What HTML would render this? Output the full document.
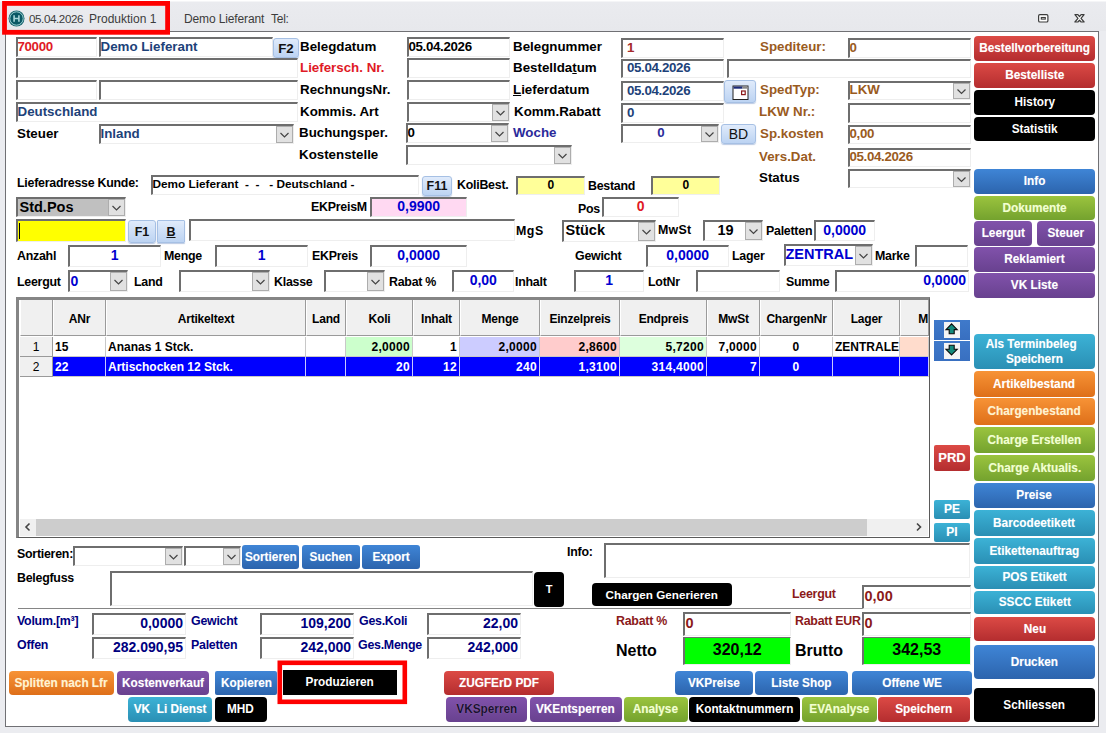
<!DOCTYPE html>
<html><head><meta charset="utf-8"><title>Produktion</title>
<style>
*{box-sizing:border-box}
html,body{margin:0;padding:0}
body{width:1106px;height:733px;overflow:hidden;position:relative;background:#ebecf0;font-family:"Liberation Sans",sans-serif;font-weight:bold}
#win{position:absolute;left:5px;top:31px;width:1094px;height:696px;background:#fff;border:1px solid #707074}
#tb{position:absolute;left:0;top:0;width:1106px;height:31px;background:linear-gradient(#fff 0,#fff 1px,#eaebef 2px,#e7e8ec 100%)}
.tt{position:absolute;top:12px;font-size:12px;font-weight:normal;color:#3c3c3c;white-space:pre;letter-spacing:-.25px}
.f{position:absolute;white-space:nowrap;overflow:hidden;text-indent:-.5px;border-top:2px solid #6e6e6e;border-left:2px solid #6e6e6e;border-right:1px solid #eee;border-bottom:1px solid #eee;}
.l{position:absolute;white-space:nowrap;line-height:1.15}
.cb{position:absolute;right:0;top:0;background:#e1e1e1;border:1px solid #adadad;display:block}
.cb svg{position:absolute;left:-1px;top:-1px}
.b{position:absolute;text-align:center;white-space:nowrap;overflow:hidden}
.sx{display:inline-block;transform:scaleX(.93);transform-origin:50% 50%}
.x{position:absolute;text-align:center;white-space:nowrap;border:1px solid #a6c0e4;border-radius:3px;background:linear-gradient(#e0ebfb,#bcd3f2);color:#111;box-shadow:0 1px 1px rgba(120,150,200,.5)}
.grid{position:absolute;background:#fff;border-top:3px solid #858585;border-left:3px solid #858585;border-right:1px solid #5a5a5a;border-bottom:1px solid #5a5a5a;overflow:hidden;font-size:12px}
.gh{position:absolute;background:#f0f0f0;border-right:1px solid #9a9a9a;border-bottom:1px solid #9a9a9a;border-left:1px solid #fff;text-align:center;color:#000;white-space:nowrap;overflow:hidden;letter-spacing:-.2px}
.gr{position:absolute;background:#f0f0f0;border-right:1px solid #9a9a9a;border-bottom:1px solid #9a9a9a;text-align:center;font-weight:normal;color:#000}
.gc{position:absolute;white-space:nowrap;overflow:hidden;padding:0 2px 0 2px;border-bottom:1px solid #c8c8c8}
</style></head><body>
<div id="tb"></div>
<div id="win"></div>
<svg style="position:absolute;left:8px;top:9.9px" width="17" height="17" viewBox="0 0 17 17"><circle cx="8.5" cy="8.5" r="8" fill="#17636d"/><circle cx="8.5" cy="8.5" r="6.7" fill="#0a5865" stroke="#a9dadc" stroke-width=".9"/><path d="M6.1 5.2v6.6M10.9 5.2v6.6M6.1 8.5h4.8" stroke="#a8d6da" stroke-width="1.6" fill="none"/></svg>
<div class="tt" style="left:29px;font-size:11.6px;letter-spacing:-.4px">05.04.2026</div>
<div class="tt" style="left:89px;letter-spacing:0">Produktion 1</div>
<div class="tt" style="left:184px;letter-spacing:-.13px">Demo Lieferant</div>
<div class="tt" style="left:271px;letter-spacing:-.25px">Tel:</div>
<svg style="position:absolute;left:1037px;top:13px" width="13" height="11" viewBox="0 0 13 11"><rect x="1.6" y="1.6" width="9.3" height="7.4" rx="1.3" fill="#fff" stroke="#3c3c3c" stroke-width="1.2"/><rect x="4.3" y="4.5" width="4" height="1.6" fill="#fff" stroke="#3c3c3c" stroke-width="1.1"/></svg>
<svg style="position:absolute;left:1073px;top:13px" width="13" height="11" viewBox="0 0 13 11"><path d="M1.9 1.6 L4.9 1.6 L6.5 3.5 L8.1 1.6 L11.1 1.6 L8 5.3 L11.1 9 L8.1 9 L6.5 7.1 L4.9 9 L1.9 9 L5 5.3 Z" fill="#fff" stroke="#3c3c3c" stroke-width="1.2" stroke-linejoin="round"/></svg>
<div class="f" style="left:16px;top:37px;width:81px;height:20px;background:#fff;color:#e01a26;text-align:left;font-size:13.33px;line-height:15px;padding:0 0px;letter-spacing:-.35px;">70000</div>
<div class="f" style="left:99px;top:37px;width:174px;height:20px;background:#fff;color:#1d4279;text-align:left;font-size:13.33px;line-height:15px;padding:0 0px;">Demo Lieferant</div>
<div class="x" style="left:273px;top:38px;width:26px;height:20px;line-height:19px;font-size:13.33px;">F2</div>
<div class="f" style="left:16px;top:58px;width:282px;height:20px;background:#fff;color:#000;text-align:left;font-size:13.33px;line-height:15px;padding:0 0px;"></div>
<div class="f" style="left:16px;top:80px;width:81px;height:20px;background:#fff;color:#000;text-align:left;font-size:13.33px;line-height:15px;padding:0 0px;"></div>
<div class="f" style="left:99px;top:80px;width:199px;height:20px;background:#fff;color:#000;text-align:left;font-size:13.33px;line-height:15px;padding:0 0px;"></div>
<div class="f" style="left:16px;top:102px;width:282px;height:20px;background:#fff;color:#1d4279;text-align:left;font-size:13.33px;line-height:15px;padding:0 0px;">Deutschland</div>
<div class="l" style="left:17px;top:126px;color:#000;font-size:13.33px;">Steuer</div>
<div class="f" style="left:99px;top:124px;width:195px;height:20px;background:#fff;color:#1d4279;text-align:left;font-size:13.33px;line-height:15px;padding:0 0px 0 0px;">Inland<span class="cb" style="width:17px;height:17px"><svg width="17" height="17" viewBox="0 0 17 17"><path d="M4.5 7.0 L8.5 11.0 L12.5 7.0" fill="none" stroke="#444" stroke-width="1.2"/></svg></span></div>
<div class="l" style="left:300px;top:39px;color:#000;font-size:13.33px;">Belegdatum</div>
<div class="l" style="left:300px;top:60px;color:#e01a26;font-size:13.33px;">Liefersch. Nr.</div>
<div class="l" style="left:300px;top:82px;color:#000;font-size:13.33px;">RechnungsNr.</div>
<div class="l" style="left:300px;top:104px;color:#000;font-size:13.33px;">Kommis. Art</div>
<div class="l" style="left:299px;top:125px;color:#000;font-size:13.33px;">Buchungsper.</div>
<div class="l" style="left:299px;top:147px;color:#000;font-size:13.33px;">Kostenstelle</div>
<div class="f" style="left:407px;top:37px;width:103px;height:20px;background:#fff;color:#000;text-align:left;font-size:13.33px;line-height:15px;padding:0 0px;letter-spacing:-.35px;">05.04.2026</div>
<div class="f" style="left:407px;top:58px;width:103px;height:20px;background:#fff;color:#000;text-align:left;font-size:13.33px;line-height:15px;padding:0 0px;"></div>
<div class="f" style="left:407px;top:80px;width:103px;height:20px;background:#fff;color:#000;text-align:left;font-size:13.33px;line-height:15px;padding:0 0px;"></div>
<div class="f" style="left:407px;top:102px;width:103px;height:20px;background:#fff;color:#000;text-align:left;font-size:13.33px;line-height:15px;padding:0 0px 0 0px;"><span class="cb" style="width:17px;height:17px"><svg width="17" height="17" viewBox="0 0 17 17"><path d="M4.5 7.0 L8.5 11.0 L12.5 7.0" fill="none" stroke="#444" stroke-width="1.2"/></svg></span></div>
<div class="f" style="left:406px;top:123px;width:103px;height:20px;background:#fff;color:#000;text-align:left;font-size:13.33px;line-height:15px;padding:0 0px 0 0px;letter-spacing:-.35px;">0<span class="cb" style="width:17px;height:17px"><svg width="17" height="17" viewBox="0 0 17 17"><path d="M4.5 7.0 L8.5 11.0 L12.5 7.0" fill="none" stroke="#444" stroke-width="1.2"/></svg></span></div>
<div class="f" style="left:406px;top:145px;width:166px;height:20px;background:#fff;color:#000;text-align:left;font-size:13.33px;line-height:15px;padding:0 0px 0 0px;"><span class="cb" style="width:17px;height:17px"><svg width="17" height="17" viewBox="0 0 17 17"><path d="M4.5 7.0 L8.5 11.0 L12.5 7.0" fill="none" stroke="#444" stroke-width="1.2"/></svg></span></div>
<div class="l" style="left:513px;top:39px;color:#000;font-size:13.33px;">Belegnummer</div>
<div class="l" style="left:513px;top:60px;color:#000;font-size:13.33px;">Bestellda<u>t</u>um</div>
<div class="l" style="left:513px;top:82px;color:#000;font-size:13.33px;"><u>L</u>ieferdatum</div>
<div class="l" style="left:514px;top:104px;color:#000;font-size:13.33px;">Komm.Rabatt</div>
<div class="l" style="left:513px;top:125px;color:#2a2a9a;font-size:13.33px;">Woche</div>
<div class="f" style="left:621px;top:38px;width:103px;height:20px;background:#fff;color:#a52a2a;text-align:left;font-size:13.33px;line-height:15px;padding:0 4.5px;letter-spacing:-.35px;">1</div>
<div class="f" style="left:621px;top:59px;width:103px;height:19px;background:#fff;color:#1d4279;text-align:left;font-size:13.33px;line-height:14px;padding:0 4.5px;letter-spacing:-.35px;">05.04.2026</div>
<div class="f" style="left:727px;top:59px;width:244px;height:19px;background:#fff;color:#000;text-align:left;font-size:13.33px;line-height:14px;padding:0 0px;"></div>
<div class="f" style="left:621px;top:81px;width:103px;height:20px;background:#fff;color:#1d4279;text-align:left;font-size:13.33px;line-height:15px;padding:0 4.5px;letter-spacing:-.35px;">05.04.2026</div>
<div class="f" style="left:621px;top:103px;width:103px;height:20px;background:#fff;color:#1d4279;text-align:left;font-size:13.33px;line-height:15px;padding:0 4.5px;letter-spacing:-.35px;">0</div>
<div class="f" style="left:621px;top:124px;width:98px;height:19px;background:#fff;color:#2a2a9a;text-align:center;font-size:13.33px;line-height:14px;padding:0 19px 0 0px;letter-spacing:-.35px;">0<span class="cb" style="width:17px;height:16px"><svg width="17" height="16" viewBox="0 0 17 16"><path d="M4.5 6.5 L8.5 10.5 L12.5 6.5" fill="none" stroke="#444" stroke-width="1.2"/></svg></span></div>
<div class="x" style="left:721px;top:124px;width:35px;height:20px;line-height:19px;font-size:14px;font-weight:normal;">BD</div>
<div class="x" style="left:724px;top:80px;width:32px;height:23px"><svg width="32" height="23" viewBox="0 0 32 23"><rect x="8" y="5" width="15" height="13.5" fill="#fff" stroke="#222" stroke-width="1"/><rect x="8.5" y="5.5" width="9" height="2.2" fill="#1a2a7a"/><rect x="17.5" y="5.5" width="5" height="2.2" fill="#888"/><rect x="16.6" y="10" width="3.6" height="3.6" fill="#fff" stroke="#8b1a1a" stroke-width="1.2"/></svg></div>
<div class="l" style="left:760px;top:39px;color:#9a5b1e;font-size:13.33px;">Spediteur:</div>
<div class="l" style="left:760px;top:82px;color:#9a5b1e;font-size:13.33px;">SpedTyp:</div>
<div class="l" style="left:759px;top:104px;color:#9a5b1e;font-size:13.33px;">LKW Nr.:</div>
<div class="l" style="left:760px;top:126px;color:#9a5b1e;font-size:13.33px;">Sp.kosten</div>
<div class="l" style="left:759px;top:149px;color:#9a5b1e;font-size:13.33px;">Vers.Dat.</div>
<div class="l" style="left:759px;top:170px;color:#000;font-size:13.33px;">Status</div>
<div class="f" style="left:848px;top:38px;width:123px;height:20px;background:#fff;color:#9a5b1e;text-align:left;font-size:13.33px;line-height:15px;padding:0 0px;letter-spacing:-.35px;">0</div>
<div class="f" style="left:848px;top:81px;width:123px;height:19px;background:#fff;color:#9a5b1e;text-align:left;font-size:13.33px;line-height:14px;padding:0 0px 0 0px;">LKW<span class="cb" style="width:17px;height:16px"><svg width="17" height="16" viewBox="0 0 17 16"><path d="M4.5 6.5 L8.5 10.5 L12.5 6.5" fill="none" stroke="#444" stroke-width="1.2"/></svg></span></div>
<div class="f" style="left:848px;top:103px;width:123px;height:20px;background:#fff;color:#000;text-align:left;font-size:13.33px;line-height:15px;padding:0 0px;"></div>
<div class="f" style="left:848px;top:125px;width:123px;height:19px;background:#fff;color:#9a5b1e;text-align:left;font-size:13.33px;line-height:14px;padding:0 0px;letter-spacing:-.35px;">0,00</div>
<div class="f" style="left:848px;top:148px;width:123px;height:19px;background:#fff;color:#9a5b1e;text-align:left;font-size:13.33px;line-height:14px;padding:0 0px;letter-spacing:-.35px;">05.04.2026</div>
<div class="f" style="left:848px;top:169px;width:123px;height:19px;background:#fff;color:#000;text-align:left;font-size:13.33px;line-height:14px;padding:0 0px 0 0px;"><span class="cb" style="width:17px;height:16px"><svg width="17" height="16" viewBox="0 0 17 16"><path d="M4.5 6.5 L8.5 10.5 L12.5 6.5" fill="none" stroke="#444" stroke-width="1.2"/></svg></span></div>
<div class="l" style="left:17px;top:176.0px;color:#000;font-size:12.4px;letter-spacing:-.25px;">Lieferadresse Kunde:</div>
<div class="f" style="left:151px;top:175px;width:268px;height:20px;background:#fff;color:#000;text-align:left;font-size:11.8px;line-height:15px;padding:0 0px;white-space:pre;">Demo Lieferant  -  -   - Deutschland -</div>
<div class="x" style="left:422px;top:176px;width:30px;height:20px;line-height:19px;font-size:12.5px;">F11</div>
<div class="l" style="left:457px;top:178.0px;color:#000;font-size:12.4px;letter-spacing:-.25px;">KoliBest.</div>
<div class="f" style="left:516px;top:176px;width:69px;height:19px;background:#ffff99;color:#000;text-align:center;font-size:12px;line-height:14px;padding:0 0px;">0</div>
<div class="l" style="left:588px;top:178.5px;color:#000;font-size:12.4px;letter-spacing:-.25px;">Bestand</div>
<div class="f" style="left:651px;top:176px;width:69px;height:19px;background:#ffff99;color:#000;text-align:center;font-size:12px;line-height:14px;padding:0 0px;">0</div>
<div class="f" style="left:16px;top:197px;width:110px;height:20px;background:#c0c0c0;color:#000;text-align:left;font-size:14.5px;line-height:15px;padding:0 2px 0 2px;line-height:17px;">Std.Pos<span class="cb" style="width:17px;height:17px"><svg width="17" height="17" viewBox="0 0 17 17"><path d="M4.5 7.0 L8.5 11.0 L12.5 7.0" fill="none" stroke="#444" stroke-width="1.2"/></svg></span></div>
<div class="l" style="left:311px;top:199.5px;color:#000;font-size:12.4px;letter-spacing:-.25px;">EKPreisM</div>
<div class="f" style="left:370px;top:197px;width:97px;height:20px;background:#ffd9f2;color:#0000d0;text-align:center;font-size:14px;line-height:15px;padding:0 0px;">0,9900</div>
<div class="l" style="left:578px;top:201.5px;color:#000;font-size:12.4px;letter-spacing:-.25px;">Pos</div>
<div class="f" style="left:602px;top:197px;width:77px;height:20px;background:#fff;color:#e01a26;text-align:center;font-size:14px;line-height:15px;padding:0 0px;">0</div>
<div class="f" style="left:16px;top:219px;width:110px;height:23px;background:#ffff00;color:#000;text-align:left;font-size:13.33px;line-height:18px;padding:0 0px;"></div>
<div style="position:absolute;left:19px;top:223px;width:1px;height:16px;background:#000"></div>
<div class="x" style="left:128px;top:220px;width:28px;height:23px;line-height:22px;font-size:12.5px;">F1</div>
<div class="x" style="left:157px;top:220px;width:28px;height:23px;line-height:22px;font-size:12.5px;border-radius:1px;"><u>B</u></div>
<div class="f" style="left:189px;top:219px;width:326px;height:22px;background:#fff;color:#000;text-align:left;font-size:13.33px;line-height:17px;padding:0 0px;"></div>
<div class="l" style="left:516px;top:223.5px;color:#000;font-size:12.4px;letter-spacing:-.25px;letter-spacing:.5px;">MgS</div>
<div class="f" style="left:562px;top:220px;width:94px;height:22px;background:#fff;color:#000;text-align:left;font-size:14.5px;line-height:17px;padding:0 2px 0 2px;">Stück<span class="cb" style="width:17px;height:19px"><svg width="17" height="19" viewBox="0 0 17 19"><path d="M4.5 8.0 L8.5 12.0 L12.5 8.0" fill="none" stroke="#444" stroke-width="1.2"/></svg></span></div>
<div class="l" style="left:658px;top:222.5px;color:#000;font-size:12.4px;letter-spacing:-.25px;letter-spacing:.3px;">MwSt</div>
<div class="f" style="left:703px;top:220px;width:60px;height:21px;background:#fff;color:#000;text-align:center;font-size:14.5px;line-height:16px;padding:0 19px 0 0px;text-indent:3px;">19<span class="cb" style="width:17px;height:18px"><svg width="17" height="18" viewBox="0 0 17 18"><path d="M4.5 7.5 L8.5 11.5 L12.5 7.5" fill="none" stroke="#444" stroke-width="1.2"/></svg></span></div>
<div class="l" style="left:766px;top:223.5px;color:#000;font-size:12.4px;letter-spacing:-.25px;">Paletten</div>
<div class="f" style="left:814px;top:220px;width:61px;height:21px;background:#fff;color:#0000d0;text-align:center;font-size:14px;line-height:16px;padding:0 0px;">0,0000</div>
<div class="l" style="left:17px;top:248.5px;color:#000;font-size:12.4px;letter-spacing:-.25px;">Anzahl</div>
<div class="f" style="left:68px;top:245px;width:93px;height:22px;background:#fff;color:#0000d0;text-align:center;font-size:14px;line-height:17px;padding:0 0px;">1</div>
<div class="l" style="left:164px;top:248.5px;color:#000;font-size:12.4px;letter-spacing:-.25px;">Menge</div>
<div class="f" style="left:215px;top:245px;width:93px;height:22px;background:#fff;color:#0000d0;text-align:center;font-size:14px;line-height:17px;padding:0 0px;">1</div>
<div class="l" style="left:312px;top:248.5px;color:#000;font-size:12.4px;letter-spacing:-.25px;">EKPreis</div>
<div class="f" style="left:370px;top:245px;width:97px;height:22px;background:#fff;color:#0000d0;text-align:center;font-size:14px;line-height:17px;padding:0 0px;">0,0000</div>
<div class="l" style="left:575px;top:248.5px;color:#000;font-size:12.4px;letter-spacing:-.25px;">Gewicht</div>
<div class="f" style="left:646px;top:245px;width:83px;height:22px;background:#fff;color:#0000d0;text-align:center;font-size:14px;line-height:17px;padding:0 0px;">0,0000</div>
<div class="l" style="left:732px;top:248.5px;color:#000;font-size:12.4px;letter-spacing:-.25px;">Lager</div>
<div class="f" style="left:784px;top:244px;width:89px;height:22px;background:#fff;color:#0000d0;text-align:left;font-size:14.5px;line-height:17px;padding:0 0px 0 0px;">ZENTRAL<span class="cb" style="width:17px;height:19px"><svg width="17" height="19" viewBox="0 0 17 19"><path d="M4.5 8.0 L8.5 12.0 L12.5 8.0" fill="none" stroke="#444" stroke-width="1.2"/></svg></span></div>
<div class="l" style="left:875px;top:248.5px;color:#000;font-size:12.4px;letter-spacing:-.25px;">Marke</div>
<div class="f" style="left:915px;top:245px;width:53px;height:22px;background:#fff;color:#000;text-align:left;font-size:13.33px;line-height:17px;padding:0 0px;"></div>
<div class="l" style="left:17px;top:274.5px;color:#000;font-size:12.4px;letter-spacing:-.25px;">Leergut</div>
<div class="f" style="left:68px;top:270px;width:60px;height:22px;background:#fff;color:#0000d0;text-align:left;font-size:14px;line-height:17px;padding:0 1px 0 1px;line-height:18px;">0<span class="cb" style="width:17px;height:19px"><svg width="17" height="19" viewBox="0 0 17 19"><path d="M4.5 8.0 L8.5 12.0 L12.5 8.0" fill="none" stroke="#444" stroke-width="1.2"/></svg></span></div>
<div class="l" style="left:134px;top:274.5px;color:#000;font-size:12.4px;letter-spacing:-.25px;">Land</div>
<div class="f" style="left:179px;top:270px;width:91px;height:22px;background:#fff;color:#000;text-align:left;font-size:13.33px;line-height:17px;padding:0 0px 0 0px;"><span class="cb" style="width:17px;height:19px"><svg width="17" height="19" viewBox="0 0 17 19"><path d="M4.5 8.0 L8.5 12.0 L12.5 8.0" fill="none" stroke="#444" stroke-width="1.2"/></svg></span></div>
<div class="l" style="left:274px;top:274.5px;color:#000;font-size:12.4px;letter-spacing:-.25px;">Klasse</div>
<div class="f" style="left:324px;top:270px;width:61px;height:22px;background:#fff;color:#000;text-align:left;font-size:13.33px;line-height:17px;padding:0 0px 0 0px;"><span class="cb" style="width:17px;height:19px"><svg width="17" height="19" viewBox="0 0 17 19"><path d="M4.5 8.0 L8.5 12.0 L12.5 8.0" fill="none" stroke="#444" stroke-width="1.2"/></svg></span></div>
<div class="l" style="left:389px;top:274.5px;color:#000;font-size:12.4px;letter-spacing:-.25px;">Rabat %</div>
<div class="f" style="left:452px;top:270px;width:62px;height:22px;background:#fff;color:#0000d0;text-align:center;font-size:14px;line-height:17px;padding:0 0px;">0,00</div>
<div class="l" style="left:515px;top:274.5px;color:#000;font-size:12.4px;letter-spacing:-.25px;">Inhalt</div>
<div class="f" style="left:574px;top:270px;width:70px;height:22px;background:#fff;color:#0000d0;text-align:center;font-size:14px;line-height:17px;padding:0 0px;">1</div>
<div class="l" style="left:648px;top:274.5px;color:#000;font-size:12.4px;letter-spacing:-.25px;">LotNr</div>
<div class="f" style="left:696px;top:270px;width:84px;height:22px;background:#fff;color:#000;text-align:left;font-size:13.33px;line-height:17px;padding:0 0px;"></div>
<div class="l" style="left:786px;top:274.5px;color:#000;font-size:12.4px;letter-spacing:-.25px;">Summe</div>
<div class="f" style="left:835px;top:270px;width:134px;height:22px;background:#fff;color:#0000d0;text-align:right;font-size:14px;line-height:17px;padding:0 2px;">0,0000</div>
<div class="grid" style="left:16px;top:297px;width:914px;height:241px">
<div class="gh" style="left:1px;top:0px;width:33px;height:36px;line-height:38px;"></div>
<div class="gh" style="left:34px;top:0px;width:53px;height:36px;line-height:38px;">ANr</div>
<div class="gh" style="left:87px;top:0px;width:200px;height:36px;line-height:38px;">Artikeltext</div>
<div class="gh" style="left:287px;top:0px;width:40px;height:36px;line-height:38px;">Land</div>
<div class="gh" style="left:327px;top:0px;width:67px;height:36px;line-height:38px;">Koli</div>
<div class="gh" style="left:394px;top:0px;width:47px;height:36px;line-height:38px;">Inhalt</div>
<div class="gh" style="left:441px;top:0px;width:80px;height:36px;line-height:38px;">Menge</div>
<div class="gh" style="left:521px;top:0px;width:80px;height:36px;line-height:38px;">Einzelpreis</div>
<div class="gh" style="left:601px;top:0px;width:87px;height:36px;line-height:38px;">Endpreis</div>
<div class="gh" style="left:688px;top:0px;width:53px;height:36px;line-height:38px;">MwSt</div>
<div class="gh" style="left:741px;top:0px;width:73px;height:36px;line-height:38px;">ChargenNr</div>
<div class="gh" style="left:814px;top:0px;width:67px;height:36px;line-height:38px;">Lager</div>
<div class="gh" style="left:881px;top:0px;width:29px;height:36px;line-height:38px;text-align:right;padding-right:0;">M</div>
<div class="gr" style="left:1px;top:37px;width:33px;height:20px;line-height:20px;">1</div>
<div class="gc" style="left:34px;top:37px;width:53px;height:20px;line-height:20px;background:#fff;color:#000;text-align:left;border-right:1px solid #c8c8c8;">15</div>
<div class="gc" style="left:87px;top:37px;width:200px;height:20px;line-height:20px;background:#fff;color:#000;text-align:left;border-right:1px solid #c8c8c8;">Ananas 1 Stck.</div>
<div class="gc" style="left:287px;top:37px;width:40px;height:20px;line-height:20px;background:#fff;color:#000;text-align:left;border-right:1px solid #c8c8c8;"></div>
<div class="gc" style="left:327px;top:37px;width:67px;height:20px;line-height:20px;background:#ccffcc;color:#000;text-align:right;letter-spacing:.3px;border-right:1px solid #c8c8c8;">2,0000</div>
<div class="gc" style="left:394px;top:37px;width:47px;height:20px;line-height:20px;background:#fff;color:#000;text-align:right;letter-spacing:.3px;border-right:1px solid #c8c8c8;">1</div>
<div class="gc" style="left:441px;top:37px;width:80px;height:20px;line-height:20px;background:#ccccff;color:#000;text-align:right;letter-spacing:.3px;border-right:1px solid #c8c8c8;">2,0000</div>
<div class="gc" style="left:521px;top:37px;width:80px;height:20px;line-height:20px;background:#ffcccc;color:#000;text-align:right;letter-spacing:.3px;border-right:1px solid #c8c8c8;">2,8600</div>
<div class="gc" style="left:601px;top:37px;width:87px;height:20px;line-height:20px;background:#ddffdd;color:#000;text-align:right;letter-spacing:.3px;border-right:1px solid #c8c8c8;">5,7200</div>
<div class="gc" style="left:688px;top:37px;width:53px;height:20px;line-height:20px;background:#fff;color:#000;text-align:right;letter-spacing:.3px;border-right:1px solid #c8c8c8;">7,0000</div>
<div class="gc" style="left:741px;top:37px;width:73px;height:20px;line-height:20px;background:#fff;color:#000;text-align:center;letter-spacing:.3px;border-right:1px solid #c8c8c8;">0</div>
<div class="gc" style="left:814px;top:37px;width:67px;height:20px;line-height:20px;background:#fff;color:#000;text-align:left;border-right:1px solid #c8c8c8;">ZENTRALE</div>
<div class="gc" style="left:881px;top:37px;width:29px;height:20px;line-height:20px;background:#ffdccc;color:#000;text-align:left;border-right:1px solid #c8c8c8;"></div>
<div class="gr" style="left:1px;top:57px;width:33px;height:20px;line-height:20px;">2</div>
<div class="gc" style="left:34px;top:57px;width:53px;height:20px;line-height:20px;background:#0000ff;color:#fff;text-align:left;border-right:1px solid #c8c8ff;">22</div>
<div class="gc" style="left:87px;top:57px;width:200px;height:20px;line-height:20px;background:#0000ff;color:#fff;text-align:left;border-right:1px solid #c8c8ff;">Artischocken 12 Stck.</div>
<div class="gc" style="left:287px;top:57px;width:40px;height:20px;line-height:20px;background:#0000ff;color:#fff;text-align:left;border-right:1px solid #c8c8ff;"></div>
<div class="gc" style="left:327px;top:57px;width:67px;height:20px;line-height:20px;background:#0000ff;color:#fff;text-align:right;letter-spacing:.3px;border-right:1px solid #c8c8ff;">20</div>
<div class="gc" style="left:394px;top:57px;width:47px;height:20px;line-height:20px;background:#0000ff;color:#fff;text-align:right;letter-spacing:.3px;border-right:1px solid #c8c8ff;">12</div>
<div class="gc" style="left:441px;top:57px;width:80px;height:20px;line-height:20px;background:#0000ff;color:#fff;text-align:right;letter-spacing:.3px;border-right:1px solid #c8c8ff;">240</div>
<div class="gc" style="left:521px;top:57px;width:80px;height:20px;line-height:20px;background:#0000ff;color:#fff;text-align:right;letter-spacing:.3px;border-right:1px solid #c8c8ff;">1,3100</div>
<div class="gc" style="left:601px;top:57px;width:87px;height:20px;line-height:20px;background:#0000ff;color:#fff;text-align:right;letter-spacing:.3px;border-right:1px solid #c8c8ff;">314,4000</div>
<div class="gc" style="left:688px;top:57px;width:53px;height:20px;line-height:20px;background:#0000ff;color:#fff;text-align:right;letter-spacing:.3px;border-right:1px solid #c8c8ff;">7</div>
<div class="gc" style="left:741px;top:57px;width:73px;height:20px;line-height:20px;background:#0000ff;color:#fff;text-align:center;letter-spacing:.3px;border-right:1px solid #c8c8ff;">0</div>
<div class="gc" style="left:814px;top:57px;width:67px;height:20px;line-height:20px;background:#0000ff;color:#fff;text-align:left;border-right:1px solid #c8c8ff;"></div>
<div class="gc" style="left:881px;top:57px;width:29px;height:20px;line-height:20px;background:#0000ff;color:#fff;text-align:left;border-right:1px solid #c8c8ff;"></div>
<div style="position:absolute;left:1px;top:219px;width:908px;height:17px;background:#f0f0f0"></div>
<div style="position:absolute;left:17px;top:219px;width:831px;height:17px;background:#cdcdcd"></div>
<svg style="position:absolute;left:5px;top:221.5px" width="8" height="10" viewBox="0 0 8 10"><path d="M5.5 1.5 L2 5 L5.5 8.5" fill="none" stroke="#444" stroke-width="1.6"/></svg>
<svg style="position:absolute;left:896px;top:221.5px" width="8" height="10" viewBox="0 0 8 10"><path d="M2 1.5 L5.5 5 L2 8.5" fill="none" stroke="#444" stroke-width="1.6"/></svg>
</div>
<div style="position:absolute;left:934px;top:320px;width:36px;height:20px;background:linear-gradient(#3f7acb,#386fc0)"><svg width="36" height="20" viewBox="0 0 36 20"><rect x="10" y="2" width="16" height="16" fill="#f4f4f4"/><path d="M17.6 3.9 L23.2 9.6 L20.2 9.6 L20.2 13.7 L15.2 13.7 L15.2 9.6 L12 9.6 Z" fill="#128a7c" stroke="#0a0a0a" stroke-width="1.1"/></svg></div>
<div style="position:absolute;left:934px;top:341px;width:36px;height:20px;background:linear-gradient(#3f7acb,#386fc0)"><svg width="36" height="20" viewBox="0 0 36 20"><rect x="10" y="2" width="16" height="16" fill="#f4f4f4"/><path d="M17.6 13.9 L23.2 8.3 L20.2 8.3 L20.2 4.2 L15.2 4.2 L15.2 8.3 L12 8.3 Z" fill="#128a7c" stroke="#0a0a0a" stroke-width="1.1"/></svg></div>
<div class="b" style="left:934px;top:445px;width:36px;height:26px;line-height:26px;background:linear-gradient(#dc4a45,#b42d2f);border-radius:2px;font-size:13px;color:#fff;text-shadow:0 0 1px rgba(255,255,255,.35);">PRD</div>
<div class="b" style="left:934px;top:500px;width:36px;height:19px;line-height:19px;background:linear-gradient(#3cb2d6,#2a8fb4);border-radius:2px;font-size:12px;color:#fff;text-shadow:0 0 1px rgba(255,255,255,.35);">PE</div>
<div class="b" style="left:934px;top:523px;width:36px;height:19px;line-height:19px;background:linear-gradient(#3cb2d6,#2a8fb4);border-radius:2px;font-size:12px;color:#fff;text-shadow:0 0 1px rgba(255,255,255,.35);">PI</div>
<div class="b" style="left:974px;top:36px;width:121px;height:25px;line-height:25px;background:linear-gradient(#dc4a45,#b42d2f);border-radius:4px;font-size:12.7px;color:#fff;text-shadow:0 0 1px rgba(255,255,255,.35);"><span class="sx">Bestellvorbereitung</span></div>
<div class="b" style="left:974px;top:63px;width:121px;height:25px;line-height:25px;background:linear-gradient(#dc4a45,#b42d2f);border-radius:4px;font-size:12.7px;color:#fff;text-shadow:0 0 1px rgba(255,255,255,.35);"><span class="sx">Bestelliste</span></div>
<div class="b" style="left:974px;top:90px;width:121px;height:25px;line-height:25px;background:linear-gradient(#000,#000);border-radius:4px;font-size:12.7px;color:#fff;"><span class="sx">History</span></div>
<div class="b" style="left:974px;top:116.5px;width:121px;height:24.5px;line-height:24.5px;background:linear-gradient(#000,#000);border-radius:4px;font-size:12.7px;color:#fff;"><span class="sx">Statistik</span></div>
<div class="b" style="left:974px;top:169px;width:121px;height:24.5px;line-height:24.5px;background:linear-gradient(#3f85d6,#2c64ad);border-radius:4px;font-size:12.7px;color:#fff;text-shadow:0 0 1px rgba(255,255,255,.35);"><span class="sx">Info</span></div>
<div class="b" style="left:974px;top:195.5px;width:121px;height:24px;line-height:24px;background:linear-gradient(#9bc43e,#74a22e);border-radius:4px;font-size:12.7px;color:#f2ffd0;text-shadow:0 0 1px rgba(255,255,255,.35);"><span class="sx">Dokumente</span></div>
<div class="b" style="left:974px;top:221px;width:58px;height:24.5px;line-height:24.5px;background:linear-gradient(#8152ab,#68418f);border-radius:4px;font-size:12.7px;color:#fff;text-shadow:0 0 1px rgba(255,255,255,.35);"><span class="sx">Leergut</span></div>
<div class="b" style="left:1037px;top:221px;width:58px;height:24.5px;line-height:24.5px;background:linear-gradient(#8152ab,#68418f);border-radius:4px;font-size:12.7px;color:#fff;text-shadow:0 0 1px rgba(255,255,255,.35);"><span class="sx">Steuer</span></div>
<div class="b" style="left:974px;top:247px;width:121px;height:24.5px;line-height:24.5px;background:linear-gradient(#8152ab,#68418f);border-radius:4px;font-size:12.7px;color:#fff;text-shadow:0 0 1px rgba(255,255,255,.35);"><span class="sx">Reklamiert</span></div>
<div class="b" style="left:974px;top:273px;width:121px;height:24.5px;line-height:24.5px;background:linear-gradient(#8152ab,#68418f);border-radius:4px;font-size:12.7px;color:#fff;text-shadow:0 0 1px rgba(255,255,255,.35);"><span class="sx">VK Liste</span></div>
<div class="b" style="left:974px;top:334px;width:121px;height:35px;line-height:35px;background:linear-gradient(#3cb2d6,#2a8fb4);border-radius:4px;font-size:12.7px;color:#fff;text-shadow:0 0 1px rgba(255,255,255,.35);line-height:15px;padding-top:3px;"><span class="sx">Als Terminbeleg&nbsp;&nbsp;<br>Speichern</span></div>
<div class="b" style="left:974px;top:370.5px;width:121px;height:26px;line-height:26px;background:linear-gradient(#f79336,#de6f19);border-radius:4px;font-size:12.7px;color:#fff;text-shadow:0 0 1px rgba(255,255,255,.35);"><span class="sx">Artikelbestand</span></div>
<div class="b" style="left:974px;top:398px;width:121px;height:26.5px;line-height:26.5px;background:linear-gradient(#f79336,#de6f19);border-radius:4px;font-size:12.7px;color:#fff3d0;text-shadow:0 0 1px rgba(255,255,255,.35);"><span class="sx">Chargenbestand</span></div>
<div class="b" style="left:974px;top:426.5px;width:121px;height:26px;line-height:26px;background:linear-gradient(#9bc43e,#74a22e);border-radius:4px;font-size:12.7px;color:#f2ffd0;text-shadow:0 0 1px rgba(255,255,255,.35);"><span class="sx">Charge Erstellen</span></div>
<div class="b" style="left:974px;top:454.5px;width:121px;height:26.5px;line-height:26.5px;background:linear-gradient(#9bc43e,#74a22e);border-radius:4px;font-size:12.7px;color:#f2ffd0;text-shadow:0 0 1px rgba(255,255,255,.35);"><span class="sx">Charge Aktualis.</span></div>
<div class="b" style="left:974px;top:483px;width:121px;height:25px;line-height:25px;background:linear-gradient(#3f85d6,#2c64ad);border-radius:4px;font-size:12.7px;color:#fff;text-shadow:0 0 1px rgba(255,255,255,.35);"><span class="sx">Preise</span></div>
<div class="b" style="left:974px;top:509.5px;width:121px;height:26px;line-height:26px;background:linear-gradient(#3cb2d6,#2a8fb4);border-radius:4px;font-size:12.7px;color:#fff;text-shadow:0 0 1px rgba(255,255,255,.35);"><span class="sx">Barcodeetikett</span></div>
<div class="b" style="left:974px;top:537.5px;width:121px;height:26px;line-height:26px;background:linear-gradient(#3cb2d6,#2a8fb4);border-radius:4px;font-size:12.7px;color:#fff;text-shadow:0 0 1px rgba(255,255,255,.35);"><span class="sx">Etikettenauftrag</span></div>
<div class="b" style="left:974px;top:565.5px;width:121px;height:23.5px;line-height:23.5px;background:linear-gradient(#3cb2d6,#2a8fb4);border-radius:4px;font-size:12.7px;color:#fff;text-shadow:0 0 1px rgba(255,255,255,.35);"><span class="sx">POS Etikett</span></div>
<div class="b" style="left:974px;top:590.5px;width:121px;height:23.5px;line-height:23.5px;background:linear-gradient(#3cb2d6,#2a8fb4);border-radius:4px;font-size:12.7px;color:#fff;text-shadow:0 0 1px rgba(255,255,255,.35);"><span class="sx">SSCC Etikett</span></div>
<div class="b" style="left:974px;top:617px;width:121px;height:24px;line-height:24px;background:linear-gradient(#dc4a45,#b42d2f);border-radius:4px;font-size:12.7px;color:#fff;text-shadow:0 0 1px rgba(255,255,255,.35);"><span class="sx">Neu</span></div>
<div class="b" style="left:974px;top:644.5px;width:121px;height:34px;line-height:34px;background:linear-gradient(#3f85d6,#2c64ad);border-radius:4px;font-size:12.7px;color:#fff;text-shadow:0 0 1px rgba(255,255,255,.35);"><span class="sx">Drucken</span></div>
<div class="b" style="left:974px;top:688px;width:121px;height:34px;line-height:34px;background:linear-gradient(#000,#000);border-radius:4px;font-size:12.7px;color:#fff;"><span class="sx">Schliessen</span></div>
<div class="l" style="left:17px;top:546.5px;color:#000;font-size:12.4px;letter-spacing:-.25px;">Sortieren:</div>
<div class="f" style="left:73px;top:546px;width:110px;height:20px;background:#fff;color:#000;text-align:left;font-size:13.33px;line-height:15px;padding:0 0px 0 0px;"><span class="cb" style="width:17px;height:17px"><svg width="17" height="17" viewBox="0 0 17 17"><path d="M4.5 7.0 L8.5 11.0 L12.5 7.0" fill="none" stroke="#444" stroke-width="1.2"/></svg></span></div>
<div class="f" style="left:184px;top:546px;width:57px;height:20px;background:#fff;color:#000;text-align:left;font-size:13.33px;line-height:15px;padding:0 0px 0 0px;"><span class="cb" style="width:17px;height:17px"><svg width="17" height="17" viewBox="0 0 17 17"><path d="M4.5 7.0 L8.5 11.0 L12.5 7.0" fill="none" stroke="#444" stroke-width="1.2"/></svg></span></div>
<div class="b" style="left:242px;top:544.5px;width:57px;height:24px;line-height:24px;background:linear-gradient(#3f85d6,#2c64ad);border-radius:3px;font-size:12.7px;color:#fff;text-shadow:0 0 1px rgba(255,255,255,.35);"><span class="sx">Sortieren</span></div>
<div class="b" style="left:302px;top:544.5px;width:57.5px;height:24px;line-height:24px;background:linear-gradient(#3f85d6,#2c64ad);border-radius:3px;font-size:12.7px;color:#fff;text-shadow:0 0 1px rgba(255,255,255,.35);"><span class="sx">Suchen</span></div>
<div class="b" style="left:362px;top:544.5px;width:58px;height:24px;line-height:24px;background:linear-gradient(#3f85d6,#2c64ad);border-radius:3px;font-size:12.7px;color:#fff;text-shadow:0 0 1px rgba(255,255,255,.35);"><span class="sx">Export</span></div>
<div class="l" style="left:567px;top:544.5px;color:#000;font-size:12.4px;letter-spacing:-.25px;">Info:</div>
<div class="f" style="left:604px;top:543px;width:366px;height:35px;background:#fff;color:#000;text-align:left;font-size:13.33px;line-height:30px;padding:0 0px;"></div>
<div class="l" style="left:17px;top:571.0px;color:#000;font-size:12.4px;letter-spacing:-.25px;">Belegfuss</div>
<div class="f" style="left:110px;top:571px;width:423px;height:35px;background:#fff;color:#000;text-align:left;font-size:13.33px;line-height:30px;padding:0 0px;"></div>
<div class="b" style="left:534px;top:571.5px;width:30px;height:35px;line-height:35px;background:linear-gradient(#000,#000);border-radius:4px;font-size:11px;color:#fff;">T</div>
<div class="b" style="left:591.5px;top:583px;width:140.5px;height:23px;line-height:23px;background:linear-gradient(#000,#000);border-radius:4px;font-size:11.7px;color:#fff;">Chargen Generieren</div>
<div class="l" style="left:792px;top:586.5px;color:#8b1a1a;font-size:12.4px;letter-spacing:-.25px;">Leergut</div>
<div class="f" style="left:862px;top:585px;width:109px;height:24px;background:#fff;color:#8b1a1a;text-align:left;font-size:14.5px;line-height:18.0px;padding:0 1px;">0,00</div>
<div class="l" style="left:17px;top:613.5px;color:#000080;font-size:12.4px;letter-spacing:-.25px;">Volum.[m³]</div>
<div class="l" style="left:17px;top:637.5px;color:#000080;font-size:12.4px;letter-spacing:-.25px;">Offen</div>
<div class="f" style="left:92px;top:613px;width:94px;height:22px;background:#fff;color:#000080;text-align:right;font-size:14px;line-height:16.0px;padding:0 2px;">0,0000</div>
<div class="f" style="left:92px;top:637px;width:94px;height:22px;background:#fff;color:#000080;text-align:right;font-size:14px;line-height:16.0px;padding:0 2px;">282.090,95</div>
<div class="l" style="left:191px;top:613.5px;color:#000080;font-size:12.4px;letter-spacing:-.25px;">Gewicht</div>
<div class="l" style="left:191px;top:637.5px;color:#000080;font-size:12.4px;letter-spacing:-.25px;">Paletten</div>
<div class="f" style="left:260px;top:613px;width:94px;height:22px;background:#fff;color:#000080;text-align:right;font-size:14px;line-height:16.0px;padding:0 2px;">109,200</div>
<div class="f" style="left:260px;top:637px;width:94px;height:22px;background:#fff;color:#000080;text-align:right;font-size:14px;line-height:16.0px;padding:0 2px;">242,000</div>
<div class="l" style="left:359px;top:613.5px;color:#000080;font-size:12.4px;letter-spacing:-.25px;">Ges.Koli</div>
<div class="l" style="left:358px;top:637.5px;color:#000080;font-size:12.4px;letter-spacing:-.25px;">Ges.Menge</div>
<div class="f" style="left:427px;top:613px;width:94px;height:22px;background:#fff;color:#000080;text-align:right;font-size:14px;line-height:16.0px;padding:0 2px;">22,00</div>
<div class="f" style="left:427px;top:637px;width:94px;height:22px;background:#fff;color:#000080;text-align:right;font-size:14px;line-height:16.0px;padding:0 2px;">242,000</div>
<div class="l" style="left:616px;top:613.5px;color:#8b1a1a;font-size:12.4px;letter-spacing:-.25px;">Rabatt %</div>
<div class="f" style="left:683px;top:612px;width:108px;height:24px;background:#fff;color:#8b1a1a;text-align:left;font-size:14.5px;line-height:18.0px;padding:0 1px;">0</div>
<div class="l" style="left:795px;top:613.5px;color:#8b1a1a;font-size:12.4px;letter-spacing:-.25px;">Rabatt EUR</div>
<div class="f" style="left:862px;top:612px;width:109px;height:24px;background:#fff;color:#8b1a1a;text-align:left;font-size:14.5px;line-height:18.0px;padding:0 1px;">0</div>
<div class="l" style="left:616px;top:642px;color:#000;font-size:16px;">Netto</div>
<div class="f" style="left:683px;top:637px;width:108px;height:28px;background:#00ff00;color:#000;text-align:center;font-size:16px;line-height:23px;padding:0 0px;border-top-width:1px;">320,12</div>
<div class="l" style="left:795px;top:642px;color:#000;font-size:16px;">Brutto</div>
<div class="f" style="left:862px;top:637px;width:109px;height:28px;background:#00ff00;color:#000;text-align:center;font-size:16px;line-height:23px;padding:0 0px;border-top-width:1px;">342,53</div>
<div style="position:absolute;left:18px;top:608px;width:844px;height:1px;background:#858585"></div>
<div class="b" style="left:9px;top:670.5px;width:105px;height:24px;line-height:24px;background:linear-gradient(#f79336,#de6f19);border-radius:4px;font-size:12.7px;color:#fff3d0;text-shadow:0 0 1px rgba(255,255,255,.35);"><span class="sx">Splitten nach Lfr</span></div>
<div class="b" style="left:117px;top:670.5px;width:92px;height:24px;line-height:24px;background:linear-gradient(#8152ab,#68418f);border-radius:4px;font-size:12.7px;color:#fff;text-shadow:0 0 1px rgba(255,255,255,.35);"><span class="sx">Kostenverkauf</span></div>
<div class="b" style="left:215px;top:670.5px;width:62px;height:24px;line-height:24px;background:linear-gradient(#3f85d6,#2c64ad);border-radius:2px;font-size:12.7px;color:#fff;text-shadow:0 0 1px rgba(255,255,255,.35);"><span class="sx">Kopieren</span></div>
<div class="b" style="left:283px;top:670px;width:114px;height:25px;line-height:25px;background:linear-gradient(#000,#000);border-radius:0px;font-size:12.7px;color:#fff;"><span class="sx">Produzieren</span></div>
<div class="b" style="left:444px;top:670.5px;width:110px;height:24px;line-height:24px;background:linear-gradient(#dc4a45,#b42d2f);border-radius:4px;font-size:12.7px;color:#fff;text-shadow:0 0 1px rgba(255,255,255,.35);"><span class="sx">ZUGFErD PDF</span></div>
<div class="b" style="left:675px;top:670.5px;width:78px;height:24px;line-height:24px;background:linear-gradient(#3f85d6,#2c64ad);border-radius:4px;font-size:12.7px;color:#fff;text-shadow:0 0 1px rgba(255,255,255,.35);"><span class="sx">VKPreise</span></div>
<div class="b" style="left:755px;top:670.5px;width:92.5px;height:24px;line-height:24px;background:linear-gradient(#3f85d6,#2c64ad);border-radius:4px;font-size:12.7px;color:#fff;text-shadow:0 0 1px rgba(255,255,255,.35);"><span class="sx">Liste Shop</span></div>
<div class="b" style="left:852px;top:670.5px;width:120px;height:24px;line-height:24px;background:linear-gradient(#3f85d6,#2c64ad);border-radius:4px;font-size:12.7px;color:#fff;text-shadow:0 0 1px rgba(255,255,255,.35);"><span class="sx">Offene WE</span></div>
<div class="b" style="left:128px;top:697px;width:84px;height:24.5px;line-height:24.5px;background:linear-gradient(#3cb2d6,#2a8fb4);border-radius:4px;font-size:12.7px;color:#fff;text-shadow:0 0 1px rgba(255,255,255,.35);white-space:pre;"><span class="sx">VK  Li Dienst</span></div>
<div class="b" style="left:214.5px;top:697px;width:52.5px;height:24.5px;line-height:24.5px;background:linear-gradient(#000,#000);border-radius:4px;font-size:12.7px;color:#fff;"><span class="sx">MHD</span></div>
<div class="b" style="left:446px;top:697px;width:81px;height:24.5px;line-height:24.5px;background:linear-gradient(#8152ab,#68418f);border-radius:4px;font-size:12.7px;color:#1a1030;text-shadow:0 0 1px rgba(255,255,255,.35);"><span class="sx">VKSperren</span></div>
<div class="b" style="left:529.5px;top:697px;width:92px;height:24.5px;line-height:24.5px;background:linear-gradient(#8152ab,#68418f);border-radius:4px;font-size:12.7px;color:#fff;text-shadow:0 0 1px rgba(255,255,255,.35);"><span class="sx">VKEntsperren</span></div>
<div class="b" style="left:624px;top:697px;width:63.5px;height:24.5px;line-height:24.5px;background:linear-gradient(#9bc43e,#74a22e);border-radius:4px;font-size:12.7px;color:#f2ffd0;text-shadow:0 0 1px rgba(255,255,255,.35);"><span class="sx">Analyse</span></div>
<div class="b" style="left:689px;top:697px;width:110.5px;height:24.5px;line-height:24.5px;background:linear-gradient(#000,#000);border-radius:4px;font-size:12.7px;color:#fff;"><span class="sx">Kontaktnummern</span></div>
<div class="b" style="left:802px;top:697px;width:74.5px;height:24.5px;line-height:24.5px;background:linear-gradient(#9bc43e,#74a22e);border-radius:4px;font-size:12.7px;color:#f2ffd0;text-shadow:0 0 1px rgba(255,255,255,.35);"><span class="sx">EVAnalyse</span></div>
<div class="b" style="left:878px;top:697px;width:92px;height:24.5px;line-height:24.5px;background:linear-gradient(#dc4a45,#b42d2f);border-radius:4px;font-size:12.7px;color:#fff;text-shadow:0 0 1px rgba(255,255,255,.35);"><span class="sx">Speichern</span></div>
<svg style="position:absolute;left:0;top:0;pointer-events:none" width="1106" height="733"><rect x="4.5" y="3.4" width="163.1" height="28.9" fill="none" stroke="#fe0000" stroke-width="4.8"/><rect x="279.8" y="662.8" width="125" height="39" fill="none" stroke="#fe0000" stroke-width="4.6"/></svg>
</body></html>
